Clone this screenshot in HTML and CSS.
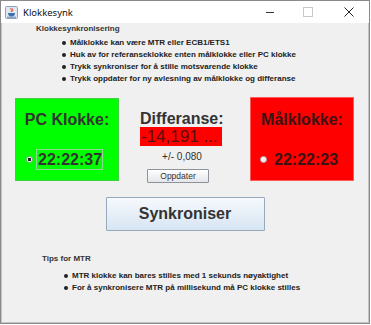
FILE: index.html
```html
<!DOCTYPE html>
<html lang="no">
<head>
<meta charset="utf-8">
<title>Klokkesynk</title>
<link rel="stylesheet" href="styles.css">
</head>
<body>
<div class="window">
  <div class="titlebar">
    <svg class="app-icon" width="13" height="13" viewBox="0 0 13 13">
      <rect x="0.5" y="0.5" width="12" height="12" rx="1" fill="#dfe7f1" stroke="#8da3bd"/>
      <path d="M6 2 C5 3.5 7.5 4 6 6 M7.5 2.5 C7 3.5 8.5 4 7.5 5.5" stroke="#e0452a" stroke-width="1" fill="none"/>
      <path d="M3 7 H10 C10 9.5 8.5 10.5 6.5 10.5 C4.5 10.5 3 9.5 3 7 Z" fill="#3a6fb0"/>
      <path d="M2 11.2 H11" stroke="#3a6fb0" stroke-width="0.8"/>
    </svg>
    <span class="title">Klokkesynk</span>
    <div class="controls">
      <span class="ctl-min"></span>
      <span class="ctl-max"></span>
      <svg class="ctl-close" width="10" height="10" viewBox="0 0 10 10">
        <path d="M0.5 0.5 L9.5 9.5 M9.5 0.5 L0.5 9.5" stroke="#222" stroke-width="1"/>
      </svg>
    </div>
  </div>
  <div class="content">
    <section class="info">
      <h2 class="heading">Klokkesynkronisering</h2>
      <ul class="bullets">
        <li>Målklokke kan være MTR eller ECB1/ETS1</li>
        <li>Huk av for referanseklokke enten målklokke eller PC klokke</li>
        <li>Trykk synkroniser for å stille motsvarende klokke</li>
        <li>Trykk oppdater for ny avlesning av målklokke og differanse</li>
      </ul>
    </section>

    <div class="clocks">
      <div class="clock clock-pc">
        <div class="clock-label">PC Klokke:</div>
        <div class="clock-row">
          <span class="radio radio-on"></span>
          <span class="clock-time focused">22:22:37</span>
        </div>
      </div>
      <div class="diff">
        <div class="diff-title">Differanse:</div>
        <div class="diff-value">-14,191 ...</div>
        <div class="diff-tol">+/- 0,080</div>
        <button class="refresh">Oppdater</button>
      </div>
      <div class="clock clock-target">
        <div class="clock-label">Målklokke:</div>
        <div class="clock-row">
          <span class="radio"></span>
          <span class="clock-time">22:22:23</span>
        </div>
      </div>
    </div>

    <button class="sync">Synkroniser</button>

    <section class="tips">
      <h2 class="heading tips-heading">Tips for MTR</h2>
      <ul class="bullets tips-bullets">
        <li>MTR klokke kan bares stilles med 1 sekunds nøyaktighet</li>
        <li>For å synkronisere MTR på millisekund må PC klokke stilles</li>
      </ul>
    </section>
  </div>
</div>
</body>
</html>
```

FILE: styles.css
```css
html, body {
  margin: 0;
  padding: 0;
  background: #ffffff;
}

.window {
  width: 370px;
  height: 324px;
  box-sizing: border-box;
  border: 1px solid #8a8a8a;
  background: #ffffff;
  font-family: "Liberation Sans", Arial, sans-serif;
  color: #333333;
}

.titlebar {
  height: 22px;
  display: flex;
  align-items: center;
  background: #ffffff;
}

.app-icon {
  margin-left: 4px;
  margin-top: 1px;
}

.title {
  margin-left: 5px;
  font-family: "Noto Sans", "Open Sans", sans-serif;
  font-size: 9.5px;
  color: #111;
}

.controls {
  margin-left: auto;
  display: flex;
  align-items: center;
  height: 22px;
}

.ctl-min {
  width: 8px;
  height: 1px;
  background: #333;
  margin-right: 29px;
}

.ctl-max {
  width: 8px;
  height: 8px;
  border: 1px solid #c8c8c8;
  margin-right: 31px;
}

.ctl-close {
  margin-right: 15px;
}

.content {
  height: 300px;
  box-sizing: border-box;
  background: #f0f0f0;
  border-left: 1px solid #c4c4c4;
  border-right: 1px solid #c4c4c4;
  border-bottom: 1px solid #c4c4c4;
  overflow: hidden;
}

.heading {
  margin: 0;
  padding-left: 34px;
  font-size: 8px;
  font-weight: bold;
  line-height: 12px;
  color: #333;
}

.bullets {
  list-style: none;
  margin: 2px 0 0;
  padding-left: 60px;
}

.bullets li {
  display: flex;
  align-items: center;
  font-size: 8px;
  font-weight: bold;
  line-height: 12px;
  color: #222;
  white-space: nowrap;
}

.bullets li::before {
  content: "";
  width: 4px;
  height: 4px;
  border-radius: 50%;
  background: #222;
  margin-right: 4px;
  flex: none;
}

.clocks {
  display: flex;
  align-items: flex-start;
  margin-top: 12px;
  padding-left: 13px;
}

.clock {
  width: 104px;
  height: 84px;
  box-sizing: border-box;
}

.clock-pc {
  background: #00ff00;
  border: 1px solid #3fcf3f;
  margin-top: 1px;
  height: 83px;
}

.clock-target {
  background: #ff0000;
  border: 1px solid #ff5a5a;
}

.clock-label {
  padding-top: 11px;
  text-align: center;
  font-size: 16px;
  font-weight: bold;
  line-height: 20px;
  color: #333;
}

.clock-target .clock-label {
  padding-top: 12px;
  color: #3a1414;
}

.clock-row {
  display: flex;
  align-items: center;
  margin-top: 19px;
  padding-left: 10px;
}

.clock-target .clock-row {
  padding-left: 9px;
}

.radio {
  width: 7px;
  height: 7px;
  box-sizing: border-box;
  border-radius: 50%;
  background: radial-gradient(circle at 40% 35%, #ffffff, #d8dde4);
  border: 1px solid #b9bfc7;
  flex: none;
}

.radio-on {
  background: radial-gradient(circle, #222 0 1.6px, #ffffff 2px);
  border-color: #9aa0a8;
}

.clock-time {
  margin-left: 3px;
  padding: 0 0 0 1px;
  border: 1px solid transparent;
  font-size: 16px;
  font-weight: bold;
  line-height: 19px;
  color: #333;
}

.clock-target .clock-time {
  margin-left: 5px;
  color: #3a1414;
}

.focused {
  border-color: #8fd88f;
}

.diff {
  width: 131px;
  box-sizing: border-box;
  padding-left: 21px;
  padding-top: 13px;
}

.diff-title {
  width: 84px;
  font-size: 16px;
  font-weight: bold;
  line-height: 17px;
  color: #333;
}

.diff-value {
  width: 82px;
  height: 19px;
  box-sizing: border-box;
  padding-left: 1px;
  background: #ff0000;
  font-size: 17px;
  line-height: 19px;
  color: #5a0f0f;
  white-space: nowrap;
  overflow: hidden;
}

.diff-tol {
  width: 84px;
  margin-top: 5px;
  text-align: center;
  font-size: 10px;
  line-height: 12px;
  color: #333;
}

.refresh {
  display: block;
  margin: 6px 0 0 7px;
  width: 62px;
  height: 14px;
  padding: 0;
  box-sizing: border-box;
  border: 1px solid #8e9299;
  border-radius: 1px;
  background: linear-gradient(#ffffff, #e4e6ea);
  font-family: "Liberation Sans", Arial, sans-serif;
  font-size: 8.5px;
  line-height: 12px;
  color: #333;
}

.sync {
  display: block;
  margin: 14px auto 0;
  width: 159px;
  height: 34px;
  padding: 0;
  box-sizing: border-box;
  border: 1px solid #98a9bd;
  border-radius: 1px;
  background: linear-gradient(#f6f9fc, #d7e5f3);
  font-family: "Liberation Sans", Arial, sans-serif;
  font-size: 16px;
  font-weight: bold;
  color: #333;
}

.tips {
  margin-top: 22px;
}

.tips-heading {
  padding-left: 40px;
}

.tips-bullets {
  margin-top: 5px;
  padding-left: 62px;
}
```
